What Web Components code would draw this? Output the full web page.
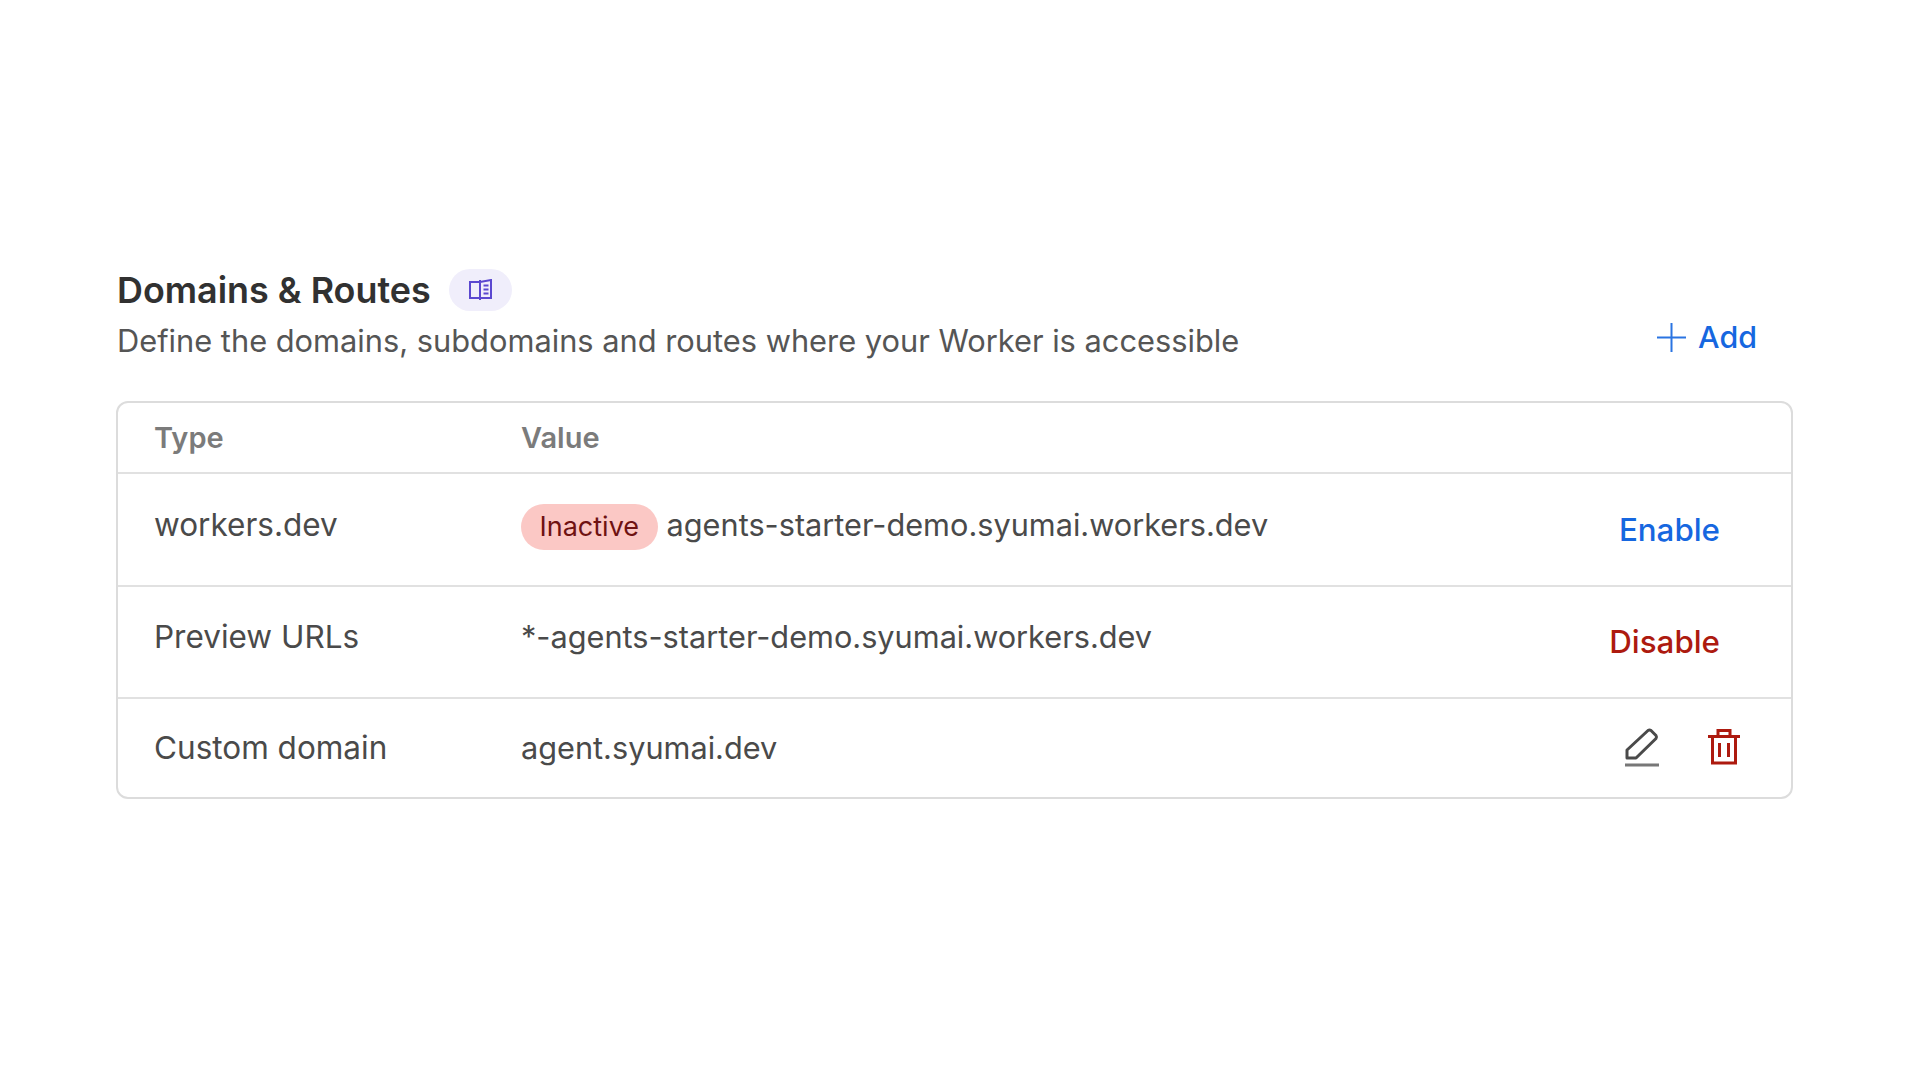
<!doctype html>
<html><head><meta charset="utf-8"><style>
html,body{margin:0;background:#fff;height:100%}
body{font-family:Inter,"Liberation Sans",sans-serif;color:#4a4a4a}
</style></head><body>
<template id="t-panel"><style>
:host{display:block;box-sizing:border-box;width:1920px;height:1080px;padding:266px 127px 0 116px}
.head{display:flex;align-items:flex-end;justify-content:space-between;height:101px;box-sizing:border-box;padding-right:36px}
.foot{display:block;margin-top:34px}
</style><div class="head"><div><slot name="title"></slot></div><slot name="action"></slot></div><div class="foot"><slot></slot></div></template>

<template id="t-title"><style>
:host{display:block;padding:0 0 5px 1px}
.r{display:flex;align-items:center;gap:18px;height:50px}
h2{margin:0;font:600 35.9px/50px Inter,sans-serif;color:#313131}
p{margin:0;font:400 30.8px/42px Inter,sans-serif;color:#555;margin-top:5px}
.pill{width:63px;height:42px;border-radius:21px;background:#f0eefb;display:flex;align-items:center;justify-content:center}
</style><div class="r"><h2><slot name="h"></slot></h2><span class="pill"><svg width="23" height="22" viewBox="0 0 23 22" fill="none" stroke="#5b48d0" stroke-width="2"><path d="M11 3H1v16h10zM11 3l11-2v18H11zM11 1v20M14.500 6.500h5M14.500 10.500h5M14.500 14.500h5"/></svg></span></div><p><slot name="d"></slot></p></template>

<template id="t-add"><style>
:host{display:flex;align-items:center;gap:12px;color:#1667e0;font:500 30.4px/40px Inter,sans-serif;margin-bottom:10px}
</style><svg width="29" height="29" viewBox="0 0 29 29" stroke="#2a74e2" stroke-width="2" fill="none"><path d="M14.500 0v29M0 14.500h29"/></svg><slot></slot></template>

<template id="t-card"><style>
:host{display:block;border:2px solid #dcdcdc;border-radius:12px;overflow:hidden;box-sizing:border-box;width:1677px}
</style><slot></slot></template>

<template id="t-row"><style>
:host{display:grid;grid-template-columns:367px 1fr auto;align-items:center;box-sizing:border-box;padding:0 36px;font:400 30.7px/40px Inter,sans-serif;color:#4a4a4a;border-top:2px solid #e1e1e1}
:host([head]){border-top:0;color:#7b7b7b;font-weight:600;font-size:29px}
.k{font-weight:400;font-size:31.5px}
:host([head]) .k{font-size:29px;font-weight:600}
.v{display:flex;align-items:center;gap:9px}
</style><div class="k"><slot name="k"></slot></div><div class="v"><slot name="v"></slot></div><div><slot name="a"></slot></div></template>

<template id="t-badge"><style>
:host{display:inline-flex;align-items:center;height:46px;padding:0 18.500px;border-radius:23px;background:#fbc8c5;color:#6f1212;font:400 27px/46px Inter,sans-serif;position:relative;top:-3px}
</style><slot></slot></template>

<template id="t-link"><style>
:host{display:inline-block;font:500 31.300px/40px Inter,sans-serif;color:var(--c,#1667e0)}
</style><slot></slot></template>

<template id="t-edit"><style>:host{display:inline-flex}</style><svg width="36" height="40" viewBox="0 0 36 40" fill="none" stroke="#4a4a4a"><path d="M3 31v-8L24 3.500q1.500-1 3 0l5 5q1 1.500 0 3L12 31z" stroke-width="3" stroke-linejoin="round"/><path d="M1 38h34" stroke="#777" stroke-width="3"/></svg></template>
<template id="t-trash"><style>:host{display:inline-flex}</style><svg width="32" height="38" viewBox="0 0 32 38" fill="none" stroke="#ad1a0f" stroke-width="3"><path d="M0 8.500h32M10 8V2.500h12V8M4.500 9v26h23V9M11.500 15v14M20.500 15v14"/></svg></template>

<dr-panel>
 <dr-title slot="title"><span slot="h">Domains &amp; Routes</span><span slot="d">Define the domains, subdomains and routes where your Worker is accessible</span></dr-title>
 <dr-add slot="action">Add</dr-add>
 <dr-card>
  <dr-row head style="height:69px"><span slot="k">Type</span><span slot="v">Value</span></dr-row>
  <dr-row style="height:113px"><span slot="k" style="position:relative;top:-5px">workers.dev</span><dr-badge slot="v">Inactive</dr-badge><span slot="v" style="position:relative;top:-5px">agents-starter-demo.syumai.workers.dev</span><dr-link slot="a" style="margin-right:35px">Enable</dr-link></dr-row>
  <dr-row style="height:112px"><span slot="k" style="position:relative;top:-5px">Preview URLs</span><span slot="v" style="position:relative;top:-5px">*-agents-starter-demo.syumai.workers.dev</span><dr-link slot="a" style="--c:#ad1a0f;margin-right:35px">Disable</dr-link></dr-row>
  <dr-row style="height:100px"><span slot="k">Custom domain</span><span slot="v">agent.syumai.dev</span><span slot="a" style="display:flex;gap:48px;align-items:center;margin:-2px 15px 0 0"><dr-edit></dr-edit><dr-trash></dr-trash></span></dr-row>
 </dr-card>
</dr-panel>
<script>
for (const n of ['panel','title','add','card','row','badge','link','edit','trash']) {
  customElements.define('dr-'+n, class extends HTMLElement {
    constructor(){super();this.attachShadow({mode:'open'}).appendChild(document.getElementById('t-'+n).content.cloneNode(true));}
  });
}
</script>
</body></html>
